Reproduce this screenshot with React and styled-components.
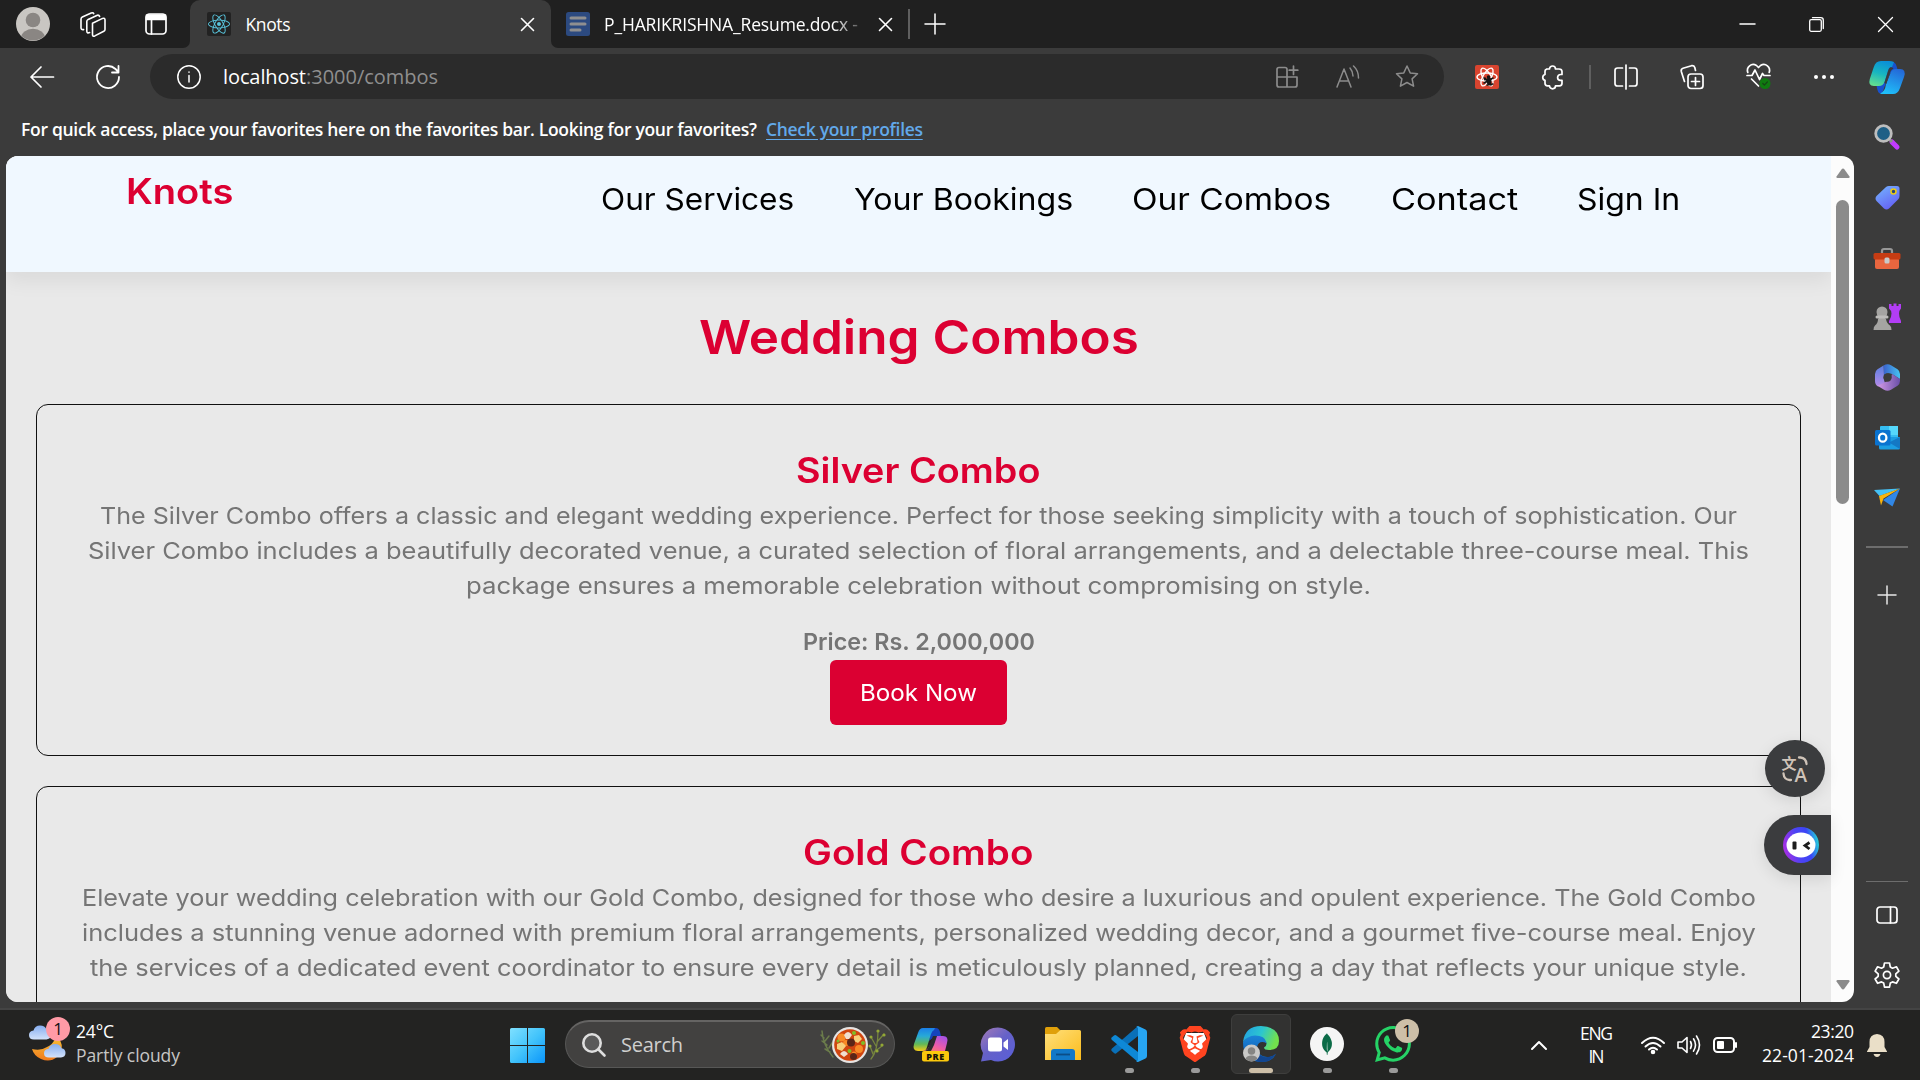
import React, { useLayoutEffect, useRef, useState } from "react";
import styled, { createGlobalStyle } from "styled-components";
import { FaReact } from "react-icons/fa";
import { SiBrave, SiMongodb, SiWhatsapp } from "react-icons/si";

const GlobalStyle = createGlobalStyle`
  * { box-sizing: border-box; }
  body { margin: 0; background: #3b3b3b; overflow: hidden; }
  svg { display: block; flex: none; overflow: visible; }
`;

const ui = `"Open Sans", "Noto Sans", sans-serif`;
const brand = `Inter, "Open Sans", sans-serif`;
const crimson = "#dc0032";

/* ---------- text set to a measured width ---------- */

const TextLine = styled.span`
  display: block;
  flex: none;
  width: ${(p) => p.$w}px;
  height: ${(p) => p.$lh}px;
  line-height: ${(p) => p.$lh}px;
  margin-left: ${(p) => p.$ml || 0}px;
  font-family: ${(p) => (p.$brand ? brand : ui)};
  font-size: ${(p) => p.$size}px;
  font-weight: ${(p) => p.$weight || 400};
  color: ${(p) => p.$color || "#fff"};
  text-decoration: ${(p) => (p.$link ? "underline" : "none")};
  text-underline-offset: 3px;
  white-space: pre;
`;

const Glyphs = styled.span`
  display: inline-block;
  transform-origin: 0 50%;
`;

/* Page text is widened glyph by glyph; interface text only changes its tracking. */
function Label({ children, w, size, lh = 24, weight, color, ml, branded, link }) {
  const ref = useRef(null);
  const [fit, setFit] = useState({});
  useLayoutEffect(() => {
    const natural = ref.current.getBoundingClientRect().width;
    setFit(
      branded
        ? { transform: `scaleX(${(w + size * 0.04) / natural})`, marginLeft: -size * 0.02 }
        : { letterSpacing: (w - natural) / Math.max(1, children.length - 1) }
    );
  }, []);
  return (
    <TextLine $w={w} $size={size} $lh={lh} $weight={weight} $color={color} $ml={ml} $brand={branded} $link={link}>
      {link ? <span ref={ref} style={fit}>{children}</span> : <Glyphs ref={ref} style={fit}>{children}</Glyphs>}
    </TextLine>
  );
}

/* ---------- shared pieces ---------- */

const Slot = styled.div`
  display: flex;
  flex: none;
  align-items: center;
  justify-content: center;
  width: ${(p) => p.$w || 66}px;
  height: ${(p) => (p.$h ? p.$h + "px" : "100%")};
  margin-left: ${(p) => p.$ml || 0}px;
`;

const Line = ({ size = 24, w, h, box, color = "#fff", sw = 1.5, children }) => (
  <svg width={w || size} height={h || size} viewBox={box || `0 0 ${w || size} ${h || size}`} fill="none"
    stroke={color} strokeWidth={sw} strokeLinecap="round" strokeLinejoin="round">
    {children}
  </svg>
);

/* ---------- browser frame ---------- */

const Desktop = styled.div`
  width: 1920px;
  height: 1080px;
  display: flex;
  flex-direction: column;
  overflow: hidden;
  background: #3b3b3b;
`;

const TabStrip = styled.div`
  display: flex;
  flex: none;
  height: 48px;
`;

const StripStart = styled.div`
  display: flex;
  align-items: center;
  width: 190px;
  background: #202020;
  border-bottom-right-radius: 7px;
`;

const ActiveTabBack = styled.div`
  width: 361px;
  background: linear-gradient(#202020 50%, #3b3b3b 50%);
`;

const ActiveTab = styled.div`
  display: flex;
  align-items: center;
  height: 48px;
  padding-left: 17px;
  background: #3b3b3b;
  border-radius: 10px 10px 0 0;
`;

const StripRest = styled.div`
  display: flex;
  align-items: center;
  flex: 1;
  padding-left: 15px;
  background: #202020;
  border-bottom-left-radius: 7px;
`;

const ReactBadge = styled.div`
  display: grid;
  place-items: center;
  width: 24px;
  height: 24px;
  border-radius: 2px;
  background: ${(p) => p.$bg};
  color: ${(p) => p.$fg};
`;

const FadeText = styled.div`
  margin-left: 14px;
  -webkit-mask-image: linear-gradient(90deg, #000 90%, transparent 104%);
  mask-image: linear-gradient(90deg, #000 90%, transparent 104%);
`;

const Divider = styled.div`
  flex: none;
  width: ${(p) => p.$w || 2}px;
  height: ${(p) => p.$h}px;
  margin-left: ${(p) => p.$ml || 0}px;
  background: ${(p) => p.$color || "#5f5f5f"};
`;

const WindowButtons = styled.div`
  display: flex;
  height: 48px;
  margin-left: auto;
`;

const Body = styled.div`
  display: flex;
  flex: none;
  height: 960px;
`;

const Main = styled.div`
  width: 1854px;
  height: 954px;
  display: flex;
  flex-direction: column;
`;

const Toolbar = styled.div`
  display: flex;
  align-items: center;
  flex: none;
  height: 57px;
  padding-left: 9px;
`;

const AddressBar = styled.div`
  display: flex;
  align-items: center;
  flex: none;
  width: 1294px;
  height: 45px;
  margin-left: 9px;
  padding-left: 27px;
  border-radius: 23px;
  background: #2b2b2b;
`;

const AddressTools = styled.div`
  display: flex;
  height: 45px;
  margin-left: auto;
  padding-right: 8px;
`;

const FavoritesBar = styled.div`
  display: flex;
  align-items: center;
  flex: none;
  height: 51px;
  padding: 0 0 4px 21px;
`;

/* ---------- web page ---------- */

const Viewport = styled.div`
  position: relative;
  display: flex;
  flex: none;
  width: 1848px;
  height: 846px;
  margin-left: 6px;
  border-radius: 12px;
  overflow: hidden;
  background: #fcfcfc;
`;

const Page = styled.div`
  width: 1825px;
  height: 846px;
  overflow: hidden;
  background: #e9e9e9;
`;

const SiteHeader = styled.header`
  display: flex;
  align-items: flex-start;
  height: 116px;
  padding: 15px 0 0 121px;
  background: #f0f8ff;
  box-shadow: 0 8px 20px rgba(0, 0, 0, 0.07);
`;

const Nav = styled.nav`
  display: flex;
  margin: 8px 0 0 369px;
  gap: 60.5px;
`;

const PageTitle = styled.div`
  display: flex;
  justify-content: center;
  padding: 35px 0 37px;
`;

const Card = styled.section`
  display: flex;
  flex-direction: column;
  align-items: center;
  height: 352px;
  margin: 0 30px 30px;
  padding-top: 41px;
  border: 1px solid #111;
  border-radius: 12px;
`;

const Copy = styled.div`
  display: flex;
  flex-direction: column;
  align-items: center;
  margin: 4px 0 21px;
`;

const BookButton = styled.button`
  display: flex;
  align-items: center;
  justify-content: center;
  width: 177px;
  height: 65px;
  padding: 0;
  border: 0;
  border-radius: 6px;
  background: #db0032;
  text-align: left;
`;

const ScrollTrack = styled.div`
  display: flex;
  flex-direction: column;
  align-items: center;
  width: 23px;
  padding: 12px 0 12px;
`;

const ScrollThumb = styled.div`
  width: 13px;
  height: 304px;
  margin: 22px 0 auto;
  border-radius: 7px;
  background: #8b8b8b;
`;

const Floating = styled.div`
  position: absolute;
  display: flex;
  align-items: center;
  right: ${(p) => p.$right}px;
  top: ${(p) => p.$top}px;
  width: ${(p) => p.$w}px;
  height: ${(p) => p.$h}px;
  padding-left: ${(p) => p.$pad}px;
  border-radius: ${(p) => p.$radius};
  background: #3b3c3e;
  box-shadow: 0 4px 16px rgba(0, 0, 0, 0.1);
`;

const Sidebar = styled.aside`
  display: flex;
  flex-direction: column;
  align-items: center;
  width: 66px;
  height: 957px;
`;

const SideRule = styled.div`
  flex: none;
  width: 42px;
  height: ${(p) => p.$h}px;
  margin-top: ${(p) => p.$mt};
  margin-bottom: ${(p) => p.$mb || 0}px;
  background: #6d6d6d;
`;

/* ---------- taskbar ---------- */

const Taskbar = styled.footer`
  display: flex;
  flex: none;
  height: 72px;
  border-top: 2px solid #444;
  background: #232322;
`;

const Weather = styled.div`
  display: flex;
  flex: none;
  width: 497px;
  padding: 14px 0 0 26px;
`;

const Stack = styled.div`
  display: flex;
  flex: none;
  flex-direction: column;
  align-items: ${(p) => p.$align || "flex-start"};
  margin-left: ${(p) => p.$ml || 0}px;
  padding-top: ${(p) => p.$pt || 0}px;
`;

const SearchBox = styled.div`
  display: flex;
  align-items: center;
  flex: none;
  width: 330px;
  height: 48px;
  margin: 10px 3px 0 8px;
  padding-left: 16px;
  border: 1px solid #575756;
  border-top: 2px solid #656463;
  border-radius: 24px;
  background: #424140;
`;

const TaskItem = styled.div`
  display: flex;
  flex-direction: column;
  align-items: center;
  flex: none;
  width: ${(p) => (p.$active ? 60 : 66)}px;
  height: ${(p) => (p.$active ? 60 : 70)}px;
  margin: ${(p) => (p.$active ? "4px 3px 0" : "0")};
  padding-top: ${(p) => (p.$active ? 11 : 16)}px;
  border: ${(p) => (p.$active ? "1px solid #3e3e3d" : "0")};
  border-radius: 6px;
  background: ${(p) => (p.$active ? "#323231" : "transparent")};
`;

const RunningMark = styled.div`
  width: ${(p) => (p.$active ? 24 : 9)}px;
  height: 5px;
  margin-top: 6px;
  border-radius: 3px;
  background: ${(p) => (p.$active ? "#cdbfa8" : "#9a9a9a")};
`;

const IconBox = styled.div`
  position: relative;
  display: grid;
  place-items: center;
  width: 36px;
  height: 36px;
`;

const CountBadge = styled.div`
  position: absolute;
  left: ${(p) => p.$x}px;
  top: ${(p) => p.$y}px;
  width: 24px;
  height: 24px;
  border-radius: 50%;
  background: ${(p) => p.$bg};
  color: #111;
  font: 17px/24px ${ui};
  text-align: center;
`;

const Tray = styled.div`
  display: flex;
  flex: none;
  width: 400px;
  margin-left: 90px;
`;

/* ---------- drawings ---------- */

const Avatar = ({ size = 34 }) => (
  <svg width={size} height={size} viewBox="0 0 34 34">
    <defs><clipPath id={"av" + size}><circle cx="17" cy="17" r="16.6" /></clipPath></defs>
    <circle cx="17" cy="17" r="17" fill="#c9c6c2" />
    <g clipPath={`url(#av${size})`} fill="#8a8683">
      <circle cx="17" cy="13" r="7.3" />
      <ellipse cx="17" cy="31" rx="12" ry="9.3" />
    </g>
  </svg>
);

const Workspaces = () => (
  <Line w={26} h={25} sw={1.6}>
    <path d="M12.5 11.2 22.6 6.4Q25 5.6 25 8v9.4q0 1.3-1.2 1.9l-9 4.6q-2.3 1-2.3-1.4z" />
    <path d="M9.6 20.6q-2.8 1-2.8-1.6V9.6q0-1.5 1.4-2.2l8.6-4q2-.8 2.8 1" />
    <path d="M3.6 17.6Q1 18 1 15.8V7.2Q1 5.700 2.300 5l8.900-4q2-.7 2.500.6" />
  </Line>
);

const TabActions = () => (
  <Line w={22} h={22} sw={1.7}>
    <rect x="1" y="1" width="20" height="20" rx="3.500" />
    <path d="M1.500 2h19v4.500h-19z" fill="#fff" />
    <path d="M6.500 6v15" />
  </Line>
);

const Cross = ({ s = 13, sw = 1.6 }) => (
  <Line size={s} sw={sw}><path d={`M.5.5 ${s - 0.5} ${s - 0.5}M${s - 0.5} .5.5 ${s - 0.5}`} /></Line>
);

const DocIcon = () => (
  <svg width="24" height="24"><rect width="24" height="24" rx="2.500" fill="#2c4a80" />
    <path d="M5 6h14M5 12h14M5 18h9" stroke="#8f8f90" strokeWidth="3" strokeLinecap="round" /></svg>
);

const Plus = ({ s = 20, color }) => <Line size={s} color={color}><path d={`M${s / 2} 0V${s}M0 ${s / 2}H${s}`} /></Line>;

const Copilot = () => (
  <svg width="36" height="33" viewBox="0 0 36 33">
    <defs>
      <linearGradient id="cpA" x1="0.600" y1="0" x2="0.300" y2="1"><stop stopColor="#0a8fd8" /><stop offset=".5" stopColor="#18b6c0" /><stop offset="1" stopColor="#62dd90" /></linearGradient>
      <linearGradient id="cpB" x1="0.700" y1="0" x2="0.300" y2="1"><stop stopColor="#2469d8" /><stop offset="1" stopColor="#1fc0fa" /></linearGradient>
    </defs>
    <path d="M17 1h6q3.500 0 4.500 4l1.500 5-8 2-6 15q-1.500 6-4 5.500Q9 32 8 27l-1-5z" fill="#1751cf" />
    <path d="M19 10q1-4 3-4h1l2-5q-2-1-5-1h-8Q6.500 0 4.800 6L.800 18q-2 7 4 7H10q4 0 5.500-4z" fill="url(#cpA)" />
    <path d="M17 23q-1 8-6 9.500 1 .5 4 .5h9q5 0 7-6l4-11q2.500-8-4-8h-4q-4 0-5.500 4z" fill="url(#cpB)" />
    <path d="M19 10q.8-3 2.500-3.800 2-.2 3 1.300-2.500 1-3.200 3.500l-4 12-2-1z" fill="#3b3b3b" />
  </svg>
);

const Heartbeat = () => (
  <Line w={25} h={27} sw={1.7}>
    <path d="M1.800 9.500C0 4 5.500-.5 10.500 2.500l2 2 2-2C19.500-.500 25 4 23.200 9.500" />
    <path d="M1 12.500h5l3-5.500 4.500 9.500 3-6 1.500 2h6M5.500 16l7 7" />
    <circle cx="19" cy="20.500" r="5.500" fill="#0f7b10" stroke="none" />
    <path d="m16.800 20.500 1.600 1.600 3-3.200" stroke="#164316" strokeWidth="1.200" />
  </Line>
);

const Puzzle = () => (
  <Line size={24} sw={1.700}>
    <path d="M5.500 4h3a3 3 0 0 1 6 0h3.500Q21 4 21 6.500v3h-1.500a2.900 2.900 0 0 0 0 5.800H21v3q0 2.500-2.500 2.500h-4a3 3 0 0 1-6 0h-2Q4 20.800 4 18.300v-3a3 3 0 0 1 0-5.800v-3Q4 4 6.500 4" />
  </Line>
);

const Star = () => (
  <Line size={24} color="#8c8c8c" sw={1.500}>
    <path d="m12 1 3.200 6.900 7.300.9-5.400 5.100 1.500 7.300-6.600-3.700-6.600 3.700 1.500-7.300L1.500 8.800l7.300-.9z" />
  </Line>
);

const AppsAdd = () => (
  <Line size={22} color="#8c8c8c" sw={1.700}>
    <path d="M1 11h20v8q0 2-2 2H3q-2 0-2-2V3.500q0-2 2-2h6q2 0 2 2V21M17.500 0v8.500M13.200 4.200h8.600" />
  </Line>
);

const ReadAloud = () => (
  <Line size={24} color="#8c8c8c" sw={1.500}>
    <path d="M1 22 8 4l7 18M3.500 16h9M14 3q3 3.500 3 8M17.500 1q5 4.500 5 12" />
  </Line>
);

const BuggedReact = () => (
  <ReactBadge $bg="#d9442f" $fg="#fff">
    <Line size={24} sw={1.400}>
      <ellipse cx="12" cy="12" rx="10" ry="4" />
      <ellipse cx="12" cy="12" rx="10" ry="4" transform="rotate(60 12 12)" />
      <ellipse cx="12" cy="12" rx="10" ry="4" transform="rotate(120 12 12)" />
      <path d="m10 13 6 7M9 18l9-5M12 20l6-1M10 15l-1-2" stroke="#151515" strokeWidth="1.500" />
      <ellipse cx="14" cy="16" rx="2.500" ry="3.500" fill="#151515" stroke="none" />
      <circle cx="13.500" cy="12" r="1.800" fill="#151515" stroke="none" />
    </Line>
  </ReactBadge>
);

const Lens = () => (
  <svg width="26" height="26" viewBox="0 0 26 26">
    <path d="m18 18 5 5" stroke="#c23bff" strokeWidth="5" strokeLinecap="round" />
    <path d="m15 15 3 3" stroke="#8e8e8e" strokeWidth="3" />
    <circle cx="9.500" cy="9.500" r="7.800" fill="#1e5f86" stroke="#bdbdbd" strokeWidth="2.800" />
  </svg>
);

const Tag = () => (
  <svg width="25" height="25" viewBox="0 0 25 25">
    <defs><linearGradient id="tg" x2=".6" y2="1"><stop stopColor="#74b7ff" /><stop offset="1" stopColor="#6562f5" /></linearGradient></defs>
    <path d="M14 1h8q2.500 0 2.500 2.500V11q0 2-1.500 3.500l-9 9q-2.500 2-5 0l-7.500-7.500q-2-2.500 0-5L11 2q1.300-1 3-1z" fill="url(#tg)" />
    <circle cx="18.500" cy="6.500" r="2.500" fill="#26457d" stroke="#eacb16" strokeWidth="1.600" />
  </svg>
);

const Toolbox = () => (
  <svg width="28" height="22" viewBox="0 -1.5 28 22">
    <path d="M9 6V3.500Q9 1.500 11 1.500h6q2 0 2 2V6" fill="none" stroke="#989898" strokeWidth="2.200" />
    <rect x="2" y="10" width="24" height="11.500" rx="2" fill="#e8663f" />
    <rect x=".5" y="5.500" width="27" height="6.500" rx="1.500" fill="#c63c13" />
    <rect x="11.500" y="10" width="5" height="6" rx="1.500" fill="#c9c9c9" />
  </svg>
);

const Chess = () => (
  <svg width="28" height="28" viewBox="0 0 28 28">
    <path d="M16 1h2.500v2h2V.500h3v2.500h2V1H28v4.500q-2 2-2 5 0 4 2 7.500v2H16v-2q2.500-3.500 2.500-7.500 0-3-2.500-5z" fill="#b23df5" />
    <path d="M6 15Q3.500 12.500 3.500 9a5.500 5.500 0 0 1 11 0q0 3.500-2.500 6l1 1q.5 4 4 6.500 1.500 1 1.500 4.500H.500Q.500 23.500 2 22.500 5 20 5 16z" fill="#a5a4a2" />
    <rect x="2.500" y="12.500" width="13" height="3" rx="1.500" fill="#bdbcba" />
  </svg>
);

const M365 = () => (
  <svg width="25" height="27" viewBox="0 0 25 27">
    <defs>
      <linearGradient id="mA" x2="1"><stop stopColor="#3a62cc" /><stop offset="1" stopColor="#46c3f2" /></linearGradient>
      <linearGradient id="mB" x2="0" y2="1"><stop stopColor="#5a7fe0" /><stop offset="1" stopColor="#b58be8" /></linearGradient>
      <linearGradient id="mC" x2="1"><stop stopColor="#d39ae6" /><stop offset="1" stopColor="#6a4fa9" /></linearGradient>
    </defs>
    <path d="M8.500 1.500Q12.500-.8 16 1.200l6.500 4Q25 7 25 10v5l-8-5q-4-2-8.500 1z" fill="url(#mA)" />
    <path d="M8.500 1.500 9 13q0 4 1 6l-7 3.500Q0 20.500 0 17v-7q0-3 2.500-4.800z" fill="url(#mB)" />
    <path d="m2.500 21.800 8-3.800q5.500-2 6.500-8l8 5v2q0 3-2.500 4.800l-6.500 4q-3.500 2-7 0z" fill="url(#mC)" />
    <circle cx="12.500" cy="13.500" r="4.200" fill="#3b3b3b" />
  </svg>
);

const Outlook = () => (
  <svg width="25" height="25" viewBox="0 0 25 25">
    <rect x="5" y="1" width="18" height="16" rx="1" fill="#35bdf2" />
    <path d="M14 1h9v9h-9z" fill="#55d8fc" />
    <path d="M4 12h21v11q0 1.500-1.500 1.500h-18Q4 24.500 4 23z" fill="#1b9de2" />
    <path d="M25 12v12L14 17.500z" fill="#1478c4" />
    <rect y="5" width="15.500" height="15.500" rx="1.500" fill="#0a73d0" />
    <ellipse cx="7.700" cy="12.700" rx="3.700" ry="4" fill="none" stroke="#fff" strokeWidth="2.300" />
  </svg>
);

const Plane = () => (
  <svg width="26" height="19" viewBox="0 0 26 19">
    <path d="M0 2 26 .500 5.500 8z" fill="#45c1f5" />
    <path d="M26 .500 18.500 18.500 9 12z" fill="#3187e6" />
    <path d="M5 8 26 .500 9.500 10.500 7 17.500z" fill="#fbb50d" />
  </svg>
);

const Gear = () => (
  <Line w={26} h={27} box="0 .5 26 27" sw={1.700}>
    <path d="M10.500 1.500h5l.800 4 2.200 1.200 3.900-1.400 2.500 4.300-3.100 2.700v2.500l3.100 2.700-2.500 4.300-3.900-1.400-2.200 1.200-.800 4h-5l-.800-4-2.200-1.200-3.900 1.400-2.500-4.300 3.100-2.700v-2.500L1.100 9.600l2.500-4.300 3.900 1.400 2.200-1.200z" />
    <circle cx="13" cy="13.500" r="3.600" />
  </Line>
);

const Translate = () => (
  <svg width="26" height="26" viewBox="0 0 26 26">
    <text x="-.5" y="12.500" fontFamily='"Noto Sans CJK SC", sans-serif' fontWeight="700" fontSize="15" fill="#cfc3b8">文</text>
    <text x="12.500" y="25.500" fontFamily='"Open Sans", sans-serif' fontWeight="600" fontSize="19" fill="#cfc3b8">A</text>
    <path d="M17 1.500h1.500q5.500.5 6 6.500M1.500 17.500q.5 6 6 6.500H9" stroke="#cfc3b8" strokeWidth="2.300" fill="none" strokeLinecap="round" />
  </svg>
);

const Bot = () => (
  <svg width="36" height="36" viewBox="0 0 36 36">
    <defs><linearGradient id="bt" x1="0" y1=".8" x2="1" y2=".6"><stop stopColor="#b42be0" /><stop offset=".45" stopColor="#4d43f4" /><stop offset=".75" stopColor="#3b45f6" /><stop offset="1" stopColor="#25c4dc" /></linearGradient></defs>
    <circle cx="18" cy="18" r="18" fill="url(#bt)" />
    <ellipse cx="18" cy="18" rx="14.500" ry="12.500" fill="#fff" />
    <rect x="9.500" y="14.500" width="4" height="8" rx="1" fill="#1d1d1d" />
    <path d="m26.500 15.500-4.500 3 4.500 3.500" fill="none" stroke="#1d1d1d" strokeWidth="2.800" />
  </svg>
);

const CloudMoon = () => (
  <svg width="40" height="44" viewBox="0 0 40 44">
    <defs><linearGradient id="cl" x2="0" y2="1"><stop stopColor="#86aef0" /><stop offset="1" stopColor="#d3e2fb" /></linearGradient>
      <linearGradient id="mn" x2="0" y2="1"><stop stopColor="#f6bb36" /><stop offset="1" stopColor="#f07a1c" /></linearGradient></defs>
    <path d="M34 16q5 10-3 17-7 6-16 2Q8 32 6 25q9 2 15-2 6-3 8-8z" fill="url(#mn)" />
    <path d="M8 15.500q-5 0-5-4.500 0-4 4.500-4.500Q9 1.500 14 1.500q5 0 6.500 4 5 1 5 5t-5 5z" fill="url(#cl)" />
    <path d="M23 33.500q-5 0-5-4.300 0-4 4.500-4.500 1.500-4.700 6.500-4.700t6.500 4.300q4 .7 4 4.700t-4.500 4.500z" fill="url(#cl)" />
  </svg>
);

const WinLogo = () => (
  <svg width="35" height="35" viewBox="0 0 35 35">
    <defs><linearGradient id="wn" x2="1" y2="1" gradientUnits="objectBoundingBox"><stop stopColor="#7fe0ff" /><stop offset=".5" stopColor="#43c4fb" /><stop offset="1" stopColor="#0a95fa" /></linearGradient></defs>
    <path d="M1.500 0H17v17H0V1.500Q0 0 1.500 0zM18 0h15.500Q35 0 35 1.500V17H18zM0 18h17v17H1.500Q0 35 0 33.500zM18 18h17v15.500q0 1.500-1.500 1.500H18z" fill="url(#wn)" />
  </svg>
);

const Stew = () => (
  <svg width="66" height="38" viewBox="0 0 66 38">
    <g fill="none" strokeLinecap="round">
      <path d="M2 5q1 14 11 26M4 12 1 9M5 15l4-5M7 19l-5-4M9 22l3-5M10 26l-5-3" stroke="#6b7c4b" strokeWidth="1.500" />
      <path d="M51 33q7-8 7-28M57 16l7-8M56 20l-5-9M54 26l8-6M53 28l-3-8" stroke="#76853f" strokeWidth="1.300" />
    </g>
    <g fill="#93a835"><circle cx="58" cy="5" r="1.600" /><circle cx="64" cy="9" r="1.600" /><circle cx="51" cy="11" r="1.600" /><circle cx="62" cy="19" r="1.600" /><circle cx="50" cy="20" r="1.600" /><circle cx="57" cy="25" r="1.600" /></g>
    <circle cx="30" cy="19" r="18" fill="#e7e4e2" />
    <circle cx="30" cy="19" r="15.800" fill="#d0450f" />
    <g fill="#f88a26"><circle cx="21.500" cy="11.500" r="4" /><circle cx="39" cy="23" r="4" /><circle cx="26" cy="17" r="3" /><circle cx="34" cy="28" r="2.500" /></g>
    <g fill="#f8cf7a"><path d="m17 18 5-2 4 4-4 5-5-2zM34 10l5-1 3 4-4 4-4-2z" /></g>
    <g fill="#5a2618"><circle cx="31" cy="16.500" r="4" /><circle cx="33.500" cy="30.500" r="3.500" /></g>
    <g fill="#f0dfd0"><path d="M24 9q4-6 8 0l-3 4h-3zM20 28q4-6 8 0l-4 3z" /></g>
    <g fill="#7fbd27"><circle cx="34" cy="7" r="2" /><circle cx="43" cy="17" r="2" /><circle cx="29.500" cy="25" r="2" /><circle cx="18" cy="15" r="1.500" /></g>
  </svg>
);

const CopilotPre = () => (
  <svg width="36" height="36" viewBox="0 0 36 36">
    <defs>
      <linearGradient id="pA" x2="0" y2="1"><stop stopColor="#1b7fe8" /><stop offset=".35" stopColor="#27a9d8" /><stop offset=".7" stopColor="#62b957" /><stop offset="1" stopColor="#f5cb16" /></linearGradient>
      <linearGradient id="pB" x1="1" x2=".2" y2="1"><stop stopColor="#9a50f0" /><stop offset=".6" stopColor="#ee5ca8" /><stop offset="1" stopColor="#fb8160" /></linearGradient>
    </defs>
    <path d="M18 2h5q3 0 4 4l1 4-7 1-5 4z" fill="#1444bd" />
    <path d="M18 8q1-3 3-4l1-2H10Q6.500 2 5 7L1 18q-2 7 4 7h5q3 0 4-4z" fill="url(#pA)" />
    <path d="M19 15q1.500-5 5-5h6q6 0 4 7l-2 8H8q6 0 8-4z" fill="url(#pB)" />
    <path d="M20 10h4l-3 9-3 6h-6q3-1 4-5z" fill="#2b2b2c" />
    <rect x="9" y="25" width="27" height="10.500" rx="2" fill="#fcc90c" />
    <text x="22.500" y="33.500" textAnchor="middle" fontFamily='"Open Sans", sans-serif' fontWeight="800" fontSize="9" letterSpacing=".6" fill="#1a1608">PRE</text>
  </svg>
);

const Chat = () => (
  <svg width="35" height="35" viewBox="0 0 35 35">
    <defs><linearGradient id="ct" x2=".9" y2="1"><stop stopColor="#a47bb6" /><stop offset=".5" stopColor="#6561c8" /><stop offset="1" stopColor="#5a5fd8" /></linearGradient></defs>
    <path d="M18 .500a17 17 0 1 1-7 32.500L1 34.500 3 26A17 17 0 0 1 18 .500z" fill="url(#ct)" />
    <rect x="8" y="10.500" width="14" height="14" rx="2.500" fill="#fff" />
    <path d="m23.500 15.500 4.500-3.500v11l-4.500-3.500z" fill="#fff" />
  </svg>
);

const Folder = () => (
  <svg width="36" height="34" viewBox="0 0 36 34">
    <defs><linearGradient id="fd" x2="1" y2="1"><stop stopColor="#ffe07c" /><stop offset="1" stopColor="#fbbc1c" /></linearGradient></defs>
    <path d="M1.500 0H12l4 4-4 4H0V1.500Q0 0 1.500 0z" fill="#e0a00a" />
    <path d="M0 7h11l4.500-4H34.500Q36 3 36 4.500V33H0z" fill="url(#fd)" />
    <path d="M6 33v-8q0-3 3-3h18q3 0 3 3v8z" fill="#1178c8" />
    <path d="M11 27.500h14" stroke="#0c4d86" strokeWidth="1.800" />
  </svg>
);

const Code = () => (
  <svg width="36" height="36" viewBox="0 0 36 36">
    <path d="M27 0v10L5 27.500Q4 28 3 27L.700 25q-1-1 0-2.200z" fill="#0a70b8" />
    <path d="M27 36V26L5 9.300q-1-.6-2 .200L.700 11.500q-1 1 0 2.200z" fill="#0e88d6" />
    <path d="M27 0l7.500 3.500Q36 4.200 36 6v24q0 1.800-1.500 2.500L27 36q-1 0-2-1 2 .5 2-1.500v-31Q27 .500 25 1z" fill="#27a5f2" />
  </svg>
);

const Edge = () => (
  <svg width="36" height="36" viewBox="0 0 36 36">
    <defs>
      <linearGradient id="eA" x2="1" y2=".3"><stop stopColor="#219de5" /><stop offset=".55" stopColor="#2cc6cf" /><stop offset="1" stopColor="#72e24d" /></linearGradient>
      <linearGradient id="eB" x2="0" y2="1"><stop stopColor="#1b86d9" /><stop offset="1" stopColor="#0f56ad" /></linearGradient>
    </defs>
    <path d="M0 16Q6 7 16 8.500q8 2 8 9-8-4-10 3.500 0 9 10 10 5 0 9-3-4 8-14 8Q0 36 0 16z" fill="url(#eB)" />
    <path d="M14 21q-.5 8 7 10 7 1 12-3.500Q28 37 16 36 7 31 14 21z" fill="#12458f" />
    <path d="M0 16Q2 0 18 0q18 1 18 15 0 9-10 9-5 0-5-2.500 3-1.500 2.500-5Q22 9.500 12 9.500 4 10 0 16z" fill="url(#eA)" />
    <g transform="translate(0 18.500) scale(.5)">
      <circle cx="17" cy="17" r="17" fill="#c9c9c7" /><circle cx="17" cy="13" r="7.500" fill="#858583" /><path d="M5 28q3-6 12-6t12 6q-5 6-12 6T5 28z" fill="#858583" />
    </g>
  </svg>
);

const BraveIcon = () => (
  <svg width="36" height="36" viewBox="0 0 36 36">
    <path d="M9 7h18l3 8-4 13-8 6-8-6-4-13z" fill="#fff" />
    <g color="#ff4420"><SiBrave size={36} /></g>
  </svg>
);

const MongoIcon = () => (
  <svg width="36" height="36" viewBox="0 0 36 36">
    <circle cx="18" cy="18" r="17" fill="#f5f5f5" />
    <g color="#0b6b47"><SiMongodb x="7" y="7" size={22} /></g>
  </svg>
);

const Wifi = () => (
  <Line w={24} h={18} sw={2}>
    <path d="M1 7Q12-3.500 23 7M4.500 10.500q7.500-7 15 0M8 13.500q4-3.600 8 0" />
    <circle cx="12" cy="16" r="1.300" fill="#fff" />
  </Line>
);

const Volume = () => (
  <Line w={24} h={20} sw={1.600}>
    <path d="M1 7h4l5-4.500v15L5 13H1zM13.500 6.500q2 3.500 0 7M16.500 3.800q4 6 0 12.400M19.500 1q6 9 0 18" />
  </Line>
);

const Battery = () => (
  <Line w={24} h={16} sw={2}>
    <rect x="1" y="1" width="20" height="14" rx="3.500" />
    <rect x="4" y="4" width="7" height="8" rx="1" fill="#fff" stroke="none" />
    <path d="M23 6v4" />
  </Line>
);

const Bell = () => (
  <svg width="20" height="23" viewBox="0 0 20 23">
    <path d="M10 0q7.500.5 7.500 8v5l2.500 4.500V18H0v-.5L2.500 13V8Q2.500.500 10 0z" fill="#eadfc8" />
    <path d="M6.500 20h7q-1 3-3.500 3t-3.500-3z" fill="#eadfc8" />
  </svg>
);

/* ---------- content ---------- */

const links = [["Our Services", 192], ["Your Bookings", 218], ["Our Combos", 198], ["Contact", 126], ["Sign In", 102]];

const combos = [
  {
    name: "Silver Combo", w: 243, price: "Price: Rs. 2,000,000",
    lines: [
      ["The Silver Combo offers a classic and elegant wedding experience. Perfect for those seeking simplicity with a touch of sophistication. Our", 1636],
      ["Silver Combo includes a beautifully decorated venue, a curated selection of floral arrangements, and a delectable three-course meal. This", 1660],
      ["package ensures a memorable celebration without compromising on style.", 904],
    ],
  },
  {
    name: "Gold Combo", w: 229,
    lines: [
      ["Elevate your wedding celebration with our Gold Combo, designed for those who desire a luxurious and opulent experience. The Gold Combo", 1673],
      ["includes a stunning venue adorned with premium floral arrangements, personalized wedding decor, and a gourmet five-course meal. Enjoy", 1673],
      ["the services of a dedicated event coordinator to ensure every detail is meticulously planned, creating a day that reflects your unique style.", 1656],
    ],
  },
];

const sideApps = [Lens, Tag, Toolbox, Chess, M365, Outlook, Plane];

const taskApps = [
  { Icon: CopilotPre }, { Icon: Chat }, { Icon: Folder },
  { Icon: Code, running: true }, { Icon: BraveIcon, running: true },
  { Icon: Edge, running: true, active: true }, { Icon: MongoIcon, running: true },
  { Icon: () => <SiWhatsapp size={36} color="#25d366" />, running: true, badge: "1" },
];

function ComboCard({ combo }) {
  return (
    <Card>
      <Label branded w={combo.w} size={35} lh={48} weight={600} color={crimson}>{combo.name}</Label>
      <Copy>
        {combo.lines.map(([text, w]) => (
          <Label key={text} branded w={w} size={23.5} lh={35} color="#757575">{text}</Label>
        ))}
      </Copy>
      {combo.price && (
        <>
          <Label branded w={231} size={23.5} lh={36} weight={600} color="#757575">{combo.price}</Label>
          <BookButton><Label branded w={116} size={23.5} lh={36}>Book Now</Label></BookButton>
        </>
      )}
    </Card>
  );
}

export default function App() {
  return (
    <Desktop>
      <GlobalStyle />
      <TabStrip>
        <StripStart>
          <Slot $w={34} $ml={16}><Avatar /></Slot>
          <Slot $w={26} $ml={30}><Workspaces /></Slot>
          <Slot $w={22} $ml={39}><TabActions /></Slot>
        </StripStart>
        <ActiveTabBack>
          <ActiveTab>
            <ReactBadge $bg="#222" $fg="#58c4dc"><FaReact size={22} /></ReactBadge>
            <Label w={45} size={17.5} ml={14.5}>Knots</Label>
            <Slot $w={13} $ml={230.5}><Cross /></Slot>
          </ActiveTab>
        </ActiveTabBack>
        <StripRest>
          <DocIcon />
          <FadeText><Label w={254} size={17.5}>P_HARIKRISHNA_Resume.docx -</Label></FadeText>
          <Slot $w={13} $ml={21}><Cross /></Slot>
          <Divider $h={30} $ml={16} />
          <Slot $w={20} $ml={15}><Plus /></Slot>
          <WindowButtons>
            <Slot $w={69}><Line w={15} h={2}><path d="M0 1h15" /></Line></Slot>
            <Slot $w={69}>
              <Line size={15} sw={1.3}><rect x=".7" y="2.700" width="11.600" height="11.600" rx="1.500" /><path d="M3.500.700h8.300q2.500 0 2.500 2.500v8.300" /></Line>
            </Slot>
            <Slot $w={69}><Cross s={15} sw={1.300} /></Slot>
          </WindowButtons>
        </StripRest>
      </TabStrip>

      <Body>
        <Main>
          <Toolbar>
            <Slot><Line w={24} h={22} sw={1.700}><path d="M23.500 11H1M11 1 1 11l10 10" /></Line></Slot>
            <Slot><Line size={24} sw={1.800}><path d="M23 12A11 11 0 1 1 19.500 4l2.500 2.500M22.500 1v6.500H16" /></Line></Slot>
            <AddressBar>
              <Line size={24}><circle cx="12" cy="12" r="11.200" /><path d="M12 10.500V17M12 7v.300" /></Line>
              <Label w={83} size={20} ml={22}>localhost</Label>
              <Label w={132} size={20} color="#8f8f8f">:3000/combos</Label>
              <AddressTools>
                <Slot $w={60}><AppsAdd /></Slot>
                <Slot $w={61}><ReadAloud /></Slot>
                <Slot $w={58}><Star /></Slot>
              </AddressTools>
            </AddressBar>
            <Slot $ml={10}><BuggedReact /></Slot>
            <Slot><Puzzle /></Slot>
            <Slot $w={7}><Divider $h={24} /></Slot>
            <Slot><Line size={24} sw={1.700}><path d="M8.500 3H3.500Q1 3 1 5.500v13Q1 21 3.500 21h5M15.500 3h5Q23 3 23 5.500v13q0 2.500-2.500 2.500h-5M12 0v24" /></Line></Slot>
            <Slot><Line size={24} sw={1.700}><rect x="8" y="9" width="15" height="14.500" rx="3" /><path d="M15.500 12.500v8M11.500 16.500h8M4.500 16.500 1.300 6.500Q.700 4 3 3.200L11.500.700Q14 .300 14.800 2.500l.700 3" /></Line></Slot>
            <Slot><Heartbeat /></Slot>
            <Slot><svg width="20" height="6" fill="#fff"><circle cx="2" cy="3" r="2" /><circle cx="10" cy="3" r="2" /><circle cx="18" cy="3" r="2" /></svg></Slot>
          </Toolbar>
          <FavoritesBar>
            <Label w={736} size={17.5} weight={600}>For quick access, place your favorites here on the favorites bar. Looking for your favorites?</Label>
            <Label w={157} size={17.5} ml={9} weight={600} color="#62a9ea" link>Check your profiles</Label>
          </FavoritesBar>

          <Viewport>
            <Page>
              <SiteHeader>
                <Label branded w={106} size={35} lh={40} weight={600} color={crimson}>Knots</Label>
                <Nav>
                  {links.map(([text, w]) => <Label key={text} branded w={w} size={30} lh={40} color="#000">{text}</Label>)}
                </Nav>
              </SiteHeader>
              <PageTitle>
                <Label branded w={438} size={47} lh={60} weight={600} color={crimson}>Wedding Combos</Label>
              </PageTitle>
              {combos.map((c) => <ComboCard key={c.name} combo={c} />)}
            </Page>
            <ScrollTrack>
              <svg width="14" height="10"><path d="M5.500 1.500Q7-.500 8.500 1.500l5 7q.5 1.500-1 1.500h-11Q0 10 .500 8.500z" fill="#8b8b8b" /></svg>
              <ScrollThumb />
              <svg width="14" height="10"><path d="M5.500 8.500q1.500 2 3 0l5-7Q14 0 12.500 0h-11Q0 0 .500 1.500z" fill="#8b8b8b" /></svg>
            </ScrollTrack>
            <Floating $right={29} $top={584} $w={60} $h={57} $pad={17} $radius="50%"><Translate /></Floating>
            <Floating $right={23} $top={659} $w={67} $h={60} $pad={19} $radius="30px 0 0 30px"><Bot /></Floating>
          </Viewport>
        </Main>

        <Sidebar>
          <Slot $h={59}><Copilot /></Slot>
          {sideApps.map((Icon, i) => <Slot key={i} $h={60}><Icon /></Slot>)}
          <SideRule $h={2} $mt="19px" />
          <Slot $h={94}><Plus s={18} color="#e8e8e8" /></Slot>
          <SideRule $h={1} $mt="auto" $mb={3} />
          <Slot $h={60}><Line w={22} h={18} sw={1.700}><rect x="1" y="1" width="20" height="16" rx="3" /><path d="M14.500 1v16" /></Line></Slot>
          <Slot $h={60}><Gear /></Slot>
        </Sidebar>
      </Body>

      <Taskbar>
        <Weather>
          <IconBox>
            <CloudMoon />
            <CountBadge $x={20} $y={-7} $bg="#ff9aa6">1</CountBadge>
          </IconBox>
          <Stack $ml={14} $pt={-4}>
            <Label w={38} size={17.5} lh={15}>24°C</Label>
            <Label w={104} size={17.5} lh={33} color="#c6c6c5">Partly cloudy</Label>
          </Stack>
        </Weather>
        <Slot $w={60} $h={70}><WinLogo /></Slot>
        <SearchBox>
          <Line size={24} color="#dedede" sw={2.600}><circle cx="10" cy="10" r="8.700" fill="#5a5a5a" /><path d="m16.500 16.500 6 6" /></Line>
          <Label w={62} size={20} ml={15} color="#cfcfce">Search</Label>
          <Slot $w={66} $ml={137}><Stew /></Slot>
        </SearchBox>
        {taskApps.map(({ Icon, running, active, badge }, i) => (
          <TaskItem key={i} $active={active}>
            <IconBox>
              <Icon />
              {badge && <CountBadge $x={20} $y={-7} $bg="#cdbfa8">{badge}</CountBadge>}
            </IconBox>
            {running && <RunningMark $active={active} />}
          </TaskItem>
        ))}
        <Tray>
          <Slot $w={20} $ml={13}><Line w={16} h={9} sw={2}><path d="m1 8 7-7 7 7" /></Line></Slot>
          <Stack $ml={31} $align="center" $pt={12}>
            <Label w={33} size={17.5} lh={23}>ENG</Label>
            <Label w={16} size={17.5} lh={23}>IN</Label>
          </Stack>
          <Slot $w={24} $ml={28}><Wifi /></Slot>
          <Slot $w={24} $ml={12}><Volume /></Slot>
          <Slot $w={24} $ml={12}><Battery /></Slot>
          <Stack $ml={25} $align="flex-end" $pt={9}>
            <Label w={43} size={17.5} lh={24}>23:20</Label>
            <Label w={92} size={17.5} lh={24}>22-01-2024</Label>
          </Stack>
          <Slot $w={20} $ml={13}><Bell /></Slot>
        </Tray>
      </Taskbar>
    </Desktop>
  );
}
